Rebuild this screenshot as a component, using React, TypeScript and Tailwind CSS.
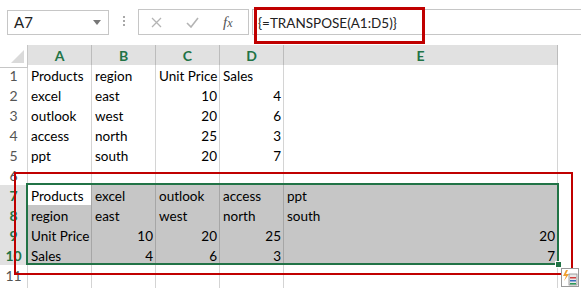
import React from "react";

type Row = { n: number; cells: (string | number | null)[] };

const rows: Row[] = [
  { n: 1, cells: ["Products", "region", "Unit Price", "Sales", null] },
  { n: 2, cells: ["excel", "east", 10, 4, null] },
  { n: 3, cells: ["outlook", "west", 20, 6, null] },
  { n: 4, cells: ["access", "north", 25, 3, null] },
  { n: 5, cells: ["ppt", "south", 20, 7, null] },
  { n: 6, cells: [null, null, null, null, null] },
  { n: 7, cells: ["Products", "excel", "outlook", "access", "ppt"] },
  { n: 8, cells: ["region", "east", "west", "north", "south"] },
  { n: 9, cells: ["Unit Price", 10, 20, 25, 20] },
  { n: 10, cells: ["Sales", 4, 6, 3, 7] },
  { n: 11, cells: [null, null, null, null, null] },
  { n: 12, cells: [null, null, null, null, null] },
];

const colLetters = ["A", "B", "C", "D", "E"];

function isSelected(n: number) {
  return n >= 7 && n <= 10;
}

function Toolbar() {
  return (
    <div className="flex h-[45px] items-start bg-white">
      {/* name box */}
      <div className="ml-[7px] mt-[10px] flex h-[25px] w-[102px] items-center justify-between border border-[#c6c6c6] pl-[6px] pr-[7px] text-[15px] text-[#222]">
        <span>A7</span>
        <svg width="8" height="5" viewBox="0 0 8 5">
          <path d="M0 0 L8 0 L4 5 Z" fill="#777" />
        </svg>
      </div>
      <div className="ml-[14px] mt-[16px] flex flex-col gap-[2px]">
        <div className="h-[2px] w-[2px] bg-[#a8a8a8]" />
        <div className="h-[2px] w-[2px] bg-[#a8a8a8]" />
        <div className="h-[2px] w-[2px] bg-[#a8a8a8]" />
      </div>
      {/* cancel / enter / fx */}
      <div className="ml-[13px] mt-[9px] flex h-[26px] w-[111px] items-center border border-[#c6c6c6]">
        <svg className="ml-[12px]" width="11" height="11" viewBox="0 0 11 11">
          <path d="M1 1 L10 10 M10 1 L1 10" stroke="#b4b4b4" strokeWidth="1.3" />
        </svg>
        <svg className="ml-[24px]" width="13" height="11" viewBox="0 0 13 11">
          <path d="M1 6 L5 10 L12 1" stroke="#b4b4b4" strokeWidth="1.6" fill="none" />
        </svg>
        <span className="ml-[24px] font-['Liberation_Serif',serif] text-[15px] italic text-[#555]">
          f<span className="text-[12px]">x</span>
        </span>
      </div>
      {/* formula input */}
      <div className="relative ml-[3px] mt-[9px] h-[26px] flex-1 border-y border-l border-[#c6c6c6]">
        <span className="absolute left-[5px] top-[3px] text-[13.5px] text-[#222]">
          {"{=TRANSPOSE(A1:D5)}"}
        </span>
        <div className="absolute left-[1px] top-[-3px] h-[37px] w-[171px] border-[3px] border-[#c00000]" />
      </div>
    </div>
  );
}

function HeaderRow() {
  return (
    <div className="grid h-[20px] grid-cols-[28px_64px_64px_64px_64px_274px_1fr]">
      <div className="relative border-r border-b border-[#c6c6c6] bg-white">
        <svg className="absolute bottom-[4px] right-[3px]" width="13" height="13" viewBox="0 0 13 13">
          <path d="M13 0 L13 13 L0 13 Z" fill="#dadada" />
        </svg>
      </div>
      {colLetters.map((c) => (
        <div
          key={c}
          className="flex items-center justify-center border-r border-b-2 border-r-[#bcbcbc] border-b-[#217346] bg-[#e1e1e1] text-[14px] font-bold text-[#217346]"
        >
          {c}
        </div>
      ))}
      <div className="border-b border-[#a0a0a0] bg-white" />
    </div>
  );
}

function Cell({ v, n, col }: { v: string | number | null; n: number; col: number }) {
  const sel = isSelected(n) && col < 5;
  const active = n === 7 && col === 0;
  const num = typeof v === "number";
  const bg = active ? "bg-white" : sel ? "bg-[#c6c6c6]" : "bg-white";
  const border = sel ? "border-[#a6a6a6]" : "border-[#d4d4d4]";
  return (
    <div
      className={`flex items-end overflow-visible whitespace-nowrap border-r border-b pb-[1px] text-[13.5px] leading-[17px] text-black ${bg} ${border} ${
        num ? "justify-end pr-[2px]" : "pl-[3px]"
      }`}
    >
      {v ?? ""}
    </div>
  );
}

function DataRow({ row }: { row: Row }) {
  const sel = isSelected(row.n);
  return (
    <div className="grid h-[20px] grid-cols-[28px_64px_64px_64px_64px_274px_1fr]">
      <div
        className={`flex items-center justify-center border-r border-b text-[14px] ${
          sel
            ? "border-[#bcbcbc] bg-[#e1e1e1] font-bold text-[#217346]"
            : "border-[#d4d4d4] bg-white text-[#555]"
        }`}
      >
        {row.n < 12 ? row.n : ""}
      </div>
      {row.cells.map((v, i) => (
        <Cell key={i} v={v} n={row.n} col={i} />
      ))}
      <div className="border-b border-[#d4d4d4] bg-white" />
    </div>
  );
}

function PasteOptions() {
  return (
    <div className="absolute left-[561px] top-[268px] flex h-[19px] w-[18px] items-center justify-center border border-[#9a9a9a] bg-white">
      <svg width="16" height="17" viewBox="0 0 16 17">
        <path d="M4 1 L1 7 L4 7 L2 12 L7 5 L4 5 L6 1 Z" fill="#f0a030" />
        <rect x="7" y="5" width="8" height="11" fill="#e8e8e8" stroke="#8a8a8a" strokeWidth="0.8" />
        <rect x="8" y="8" width="6" height="1.5" fill="#d04040" />
        <rect x="8" y="11" width="6" height="1.5" fill="#3a6ec0" />
        <rect x="8" y="14" width="6" height="1.5" fill="#2a9a5a" />
      </svg>
    </div>
  );
}

export default function App() {
  return (
    <div className="relative h-[288px] w-[581px] overflow-hidden bg-white font-['Lato',sans-serif]">
      <Toolbar />
      <HeaderRow />
      {rows.map((r) => (
        <DataRow key={r.n} row={r} />
      ))}
      {/* selection border */}
      <div className="absolute left-[26px] top-[183px] h-[82px] w-[533px] border-2 border-[#217346]" />
      <div className="absolute left-[555px] top-[261px] h-[7px] w-[7px] border border-white bg-[#217346]" />
      {/* annotation box */}
      <div className="absolute left-[14px] top-[172px] h-[103px] w-[559px] border-2 border-[#c00000]" />
      <PasteOptions />
    </div>
  );
}
